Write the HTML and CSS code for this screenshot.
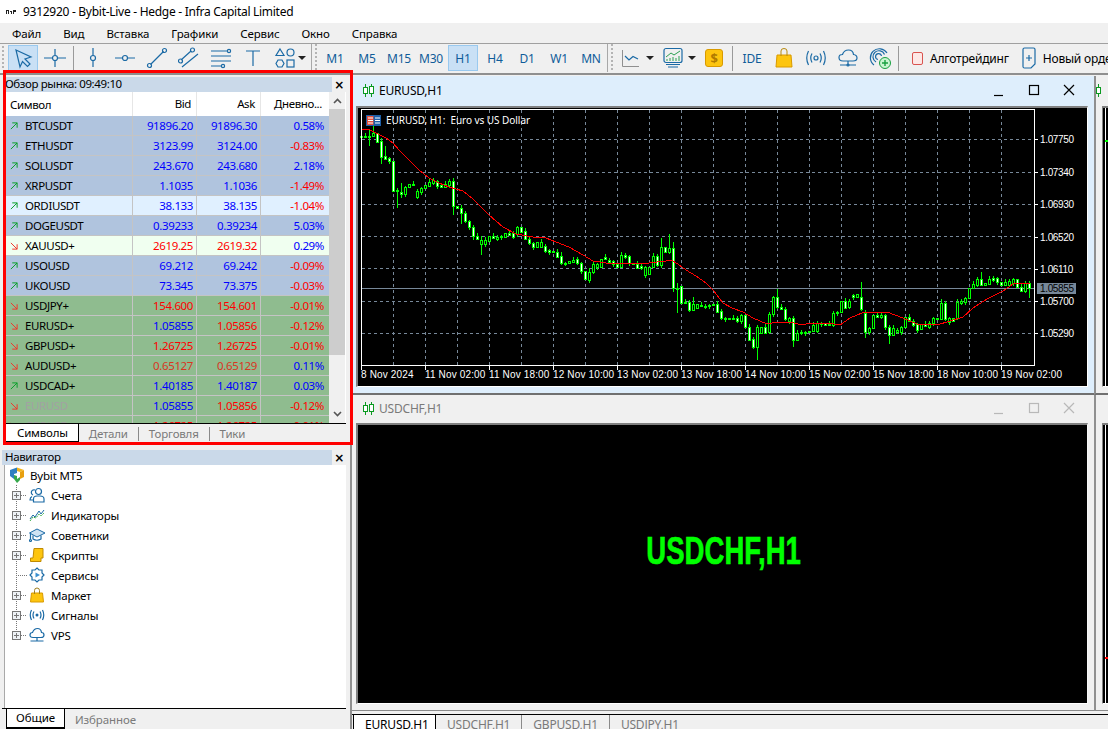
FILE: index.html
```html
<!DOCTYPE html>
<html lang="ru">
<head>
    <meta charset="UTF-8">
    <meta name="viewport" content="width=device-width, initial-scale=1.0">
    <title>9312920 - Bybit-Live - Hedge - Infra Capital Limited</title>
    <link rel="stylesheet" href="styles.css">
</head>

<body>
    <svg class="defs">
        <symbol id="arrow-up" viewBox="0 0 9 9"><path d="M1 8 L8 1 M2.5 1 H8 V6.5"/></symbol>
        <symbol id="arrow-down" viewBox="0 0 9 9"><path d="M1 1 L8 8 M2.5 8 H8 V2.5"/></symbol>
        <symbol id="plus-box" viewBox="0 0 9 9"><rect x="0.5" y="0.5" width="8" height="8"/><path d="M2 4.5 H7 M4.5 2 V7"/></symbol>
    </svg>

    <div class="title-bar">
        <svg class="title-icon" width="10" height="6" viewBox="0 0 10 6"><path d="M0 1 H3 V5 H2 V2 H1 V5 H0 Z M4 2 H6 V5 H5 V3 H4 Z M7 1 H10 V3 H8 V5 H7 Z" fill="#222"/></svg>
        <span>9312920 - Bybit-Live - Hedge - Infra Capital Limited</span>
    </div>

    <div class="menu-bar">
        <span>Файл</span><span>Вид</span><span>Вставка</span><span>Графики</span><span>Сервис</span><span>Окно</span><span>Справка</span>
    </div>

    <div class="tool-bar">
        <div class="grip-dots"></div>
        <div class="tool active">
            <svg width="22" height="22" viewBox="0 0 22 22"><path class="ic" d="M4 3 L19 10 L13 12 L18 17 L15.5 19.5 L10.5 14.5 L8 20 Z" fill="#dcecf8"/></svg>
        </div>
        <div class="tool">
            <svg width="22" height="22" viewBox="0 0 22 22"><path class="ic" d="M0 11 H8 M14 11 H22 M11 2 V8 M11 14 V20"/><circle class="ic" cx="11" cy="11" r="2.5"/></svg>
        </div>
        <div class="tool-sep"></div>
        <div class="tool">
            <svg width="22" height="22" viewBox="0 0 22 22"><path class="ic" d="M11 1 V8.5 M11 13.5 V20"/><circle class="ic" cx="11" cy="11" r="2.5"/></svg>
        </div>
        <div class="tool">
            <svg width="22" height="22" viewBox="0 0 22 22"><path class="ic" d="M1 11 H8.5 M13.5 11 H21"/><circle class="ic" cx="11" cy="11" r="2.5"/></svg>
        </div>
        <div class="tool">
            <svg width="22" height="22" viewBox="0 0 22 22"><path class="ic" d="M4.5 17.5 L17.5 4.5"/><circle class="ic" cx="3.5" cy="18.5" r="2"/><circle class="ic" cx="18.5" cy="3.5" r="2"/></svg>
        </div>
        <div class="tool">
            <svg width="22" height="22" viewBox="0 0 22 22"><path class="ic" d="M3 13 L13 4 M4 20 L20 7"/><circle class="ic" cx="2.5" cy="14" r="2"/><circle class="ic" cx="14.5" cy="3" r="2"/></svg>
        </div>
        <div class="tool">
            <svg width="22" height="22" viewBox="0 0 22 22"><path class="ic" d="M1 4 H17 M1 9 H21 M1 14 H21 M1 19 H11"/><circle class="ic" cx="19" cy="4" r="1.6"/><circle class="ic" cx="13" cy="19" r="1.6"/></svg>
        </div>
        <div class="tool">
            <svg width="22" height="22" viewBox="0 0 22 22"><path class="ic" d="M4 4 H18 M11 4 V19"/></svg>
        </div>
        <div class="tool">
            <svg width="22" height="22" viewBox="0 0 22 22"><path class="ic" d="M6 2 L10 8.5 H2 Z M4 13 H8 L10 16.5 L8 20 H4 L2 16.5 Z"/><circle class="ic" cx="16.5" cy="5.5" r="3.5"/><rect class="ic" x="13" y="13" width="7" height="7"/></svg>
        </div>
        <div class="caret narrow"></div>
        <div class="tool-grip"></div>
        <div class="tool tf">M1</div>
        <div class="tool tf">M5</div>
        <div class="tool tf">M15</div>
        <div class="tool tf">M30</div>
        <div class="tool tf active">H1</div>
        <div class="tool tf">H4</div>
        <div class="tool tf">D1</div>
        <div class="tool tf">W1</div>
        <div class="tool tf">MN</div>
        <div class="tool-grip second"></div>
        <div class="tool">
            <svg width="20" height="20" viewBox="0 0 20 20"><path d="M1.5 2 V18.5 H18" fill="none" stroke="#909090"/><path class="ic" d="M4 8 L8 12 L12 8.5 L17 11"/></svg>
        </div>
        <div class="caret"></div>
        <div class="tool small">
            <svg width="22" height="22" viewBox="0 0 22 22"><rect class="ic" x="2" y="1.5" width="18" height="14" rx="2"/><path d="M4 10 L9 6 L12 8 L18 4" fill="none" stroke="#2aa050"/><path d="M5 14 V12 M8 14 V11 M11 14 V10 M14 14 V11 M17 14 V9" stroke="#2aa050"/><path class="ic" d="M4 17.5 H18 M6 20 H16"/></svg>
        </div>
        <div class="caret"></div>
        <div class="tool small-gap">
            <svg width="18" height="18" viewBox="0 0 18 18"><rect x="0.5" y="0.5" width="17" height="17" rx="2.5" fill="#fdc50f" stroke="#d99a00"/><text x="9" y="13.5" class="dollar">$</text></svg>
        </div>
        <div class="tool-sep plain"></div>
        <div class="tool ide">IDE</div>
        <div class="tool">
            <svg width="20" height="22" viewBox="0 0 20 22"><path d="M3 8 H17 L18 20 H2 Z" fill="#fdc50f" stroke="#d99a00"/><path d="M7 9 V4 Q7 1.5 10 1.5 Q13 1.5 13 4 V9" fill="none" stroke="#b88a10"/></svg>
        </div>
        <div class="tool">
            <svg width="22" height="18" viewBox="0 0 22 18"><circle class="ic" cx="11" cy="9" r="2"/><path class="ic" d="M7 4.5 Q4.5 9 7 13.5 M15 4.5 Q17.500 9 15 13.500 M3.500 2 Q0 9 3.500 16 M18.500 2 Q22 9 18.500 16"/></svg>
        </div>
        <div class="tool">
            <svg width="22" height="22" viewBox="0 0 22 22"><path class="ic" d="M6 14 Q2 14 2 10.500 Q2 7.500 5.500 7.500 Q7 3 11.500 3 Q16 3 16.500 7.500 Q20 8 20 11 Q20 14 16 14 Z M11 14 V18 M3 18 H19"/><circle class="ic" cx="11" cy="18" r="1"/></svg>
        </div>
        <div class="tool">
            <svg width="24" height="24" viewBox="0 0 24 24"><path class="ic" d="M6 19 A9 9 0 1 1 19 7 M8 16 A6 6 0 1 1 16.500 8.500 M10 13.500 A3 3 0 1 1 13.500 10"/><circle cx="17" cy="17" r="5.500" fill="#c8f5d0" stroke="#18a040"/><path d="M17 14 V20 M14 17 H20" stroke="#18a040" stroke-width="1.400"/></svg>
        </div>
        <div class="tool-sep plain"></div>
        <div class="tool-wide">
            <span class="algo-box"></span>
            <span>Алготрейдинг</span>
        </div>
        <div class="tool-wide">
            <svg width="14" height="22" viewBox="0 0 14 22"><path class="ic" d="M1 2.500 Q1 1 2.500 1 H11.500 Q13 1 13 2.500 V17 L9 21 H2.500 Q1 21 1 19.500 Z M4 11 H10 M7 8 V14"/></svg>
            <span>Новый ордер</span>
        </div>
    </div>

    <div class="work-area">
        <div class="dock">
            <div class="pane market">
                <div class="pane-head"><span class="pane-name">Обзор рынка: 09:49:10</span><span class="pane-close">×</span></div>
                <div class="watch">
                    <div class="watch-list">
                        <div class="watch-row head">
                            <div class="col-sym">Символ</div><div class="col">Bid</div><div class="col">Ask</div><div class="col col-day">Дневно...</div>
                        </div>
                        <div class="watch-rows">
                            <div class="watch-row steel"><div class="col-sym"><svg class="arr up"><use href="#arrow-up"/></svg>BTCUSDT</div><div class="col b">91896.20</div><div class="col b">91896.30</div><div class="col col-day b">0.58%</div></div>
                            <div class="watch-row steel"><div class="col-sym"><svg class="arr up"><use href="#arrow-up"/></svg>ETHUSDT</div><div class="col b">3123.99</div><div class="col b">3124.00</div><div class="col col-day r">-0.83%</div></div>
                            <div class="watch-row steel"><div class="col-sym"><svg class="arr up"><use href="#arrow-up"/></svg>SOLUSDT</div><div class="col b">243.670</div><div class="col b">243.680</div><div class="col col-day b">2.18%</div></div>
                            <div class="watch-row steel"><div class="col-sym"><svg class="arr up"><use href="#arrow-up"/></svg>XRPUSDT</div><div class="col b">1.1035</div><div class="col b">1.1036</div><div class="col col-day r">-1.49%</div></div>
                            <div class="watch-row sky"><div class="col-sym"><svg class="arr up"><use href="#arrow-up"/></svg>ORDIUSDT</div><div class="col b">38.133</div><div class="col b">38.135</div><div class="col col-day r">-1.04%</div></div>
                            <div class="watch-row steel"><div class="col-sym"><svg class="arr up"><use href="#arrow-up"/></svg>DOGEUSDT</div><div class="col b">0.39233</div><div class="col b">0.39234</div><div class="col col-day b">5.03%</div></div>
                            <div class="watch-row dew"><div class="col-sym"><svg class="arr down"><use href="#arrow-down"/></svg>XAUUSD+</div><div class="col r">2619.25</div><div class="col r">2619.32</div><div class="col col-day b">0.29%</div></div>
                            <div class="watch-row steel"><div class="col-sym"><svg class="arr up"><use href="#arrow-up"/></svg>USOUSD</div><div class="col b">69.212</div><div class="col b">69.242</div><div class="col col-day r">-0.09%</div></div>
                            <div class="watch-row steel"><div class="col-sym"><svg class="arr up"><use href="#arrow-up"/></svg>UKOUSD</div><div class="col b">73.345</div><div class="col b">73.375</div><div class="col col-day r">-0.03%</div></div>
                            <div class="watch-row sea"><div class="col-sym"><svg class="arr down"><use href="#arrow-down"/></svg>USDJPY+</div><div class="col r">154.600</div><div class="col r">154.601</div><div class="col col-day r">-0.01%</div></div>
                            <div class="watch-row sea"><div class="col-sym"><svg class="arr down"><use href="#arrow-down"/></svg>EURUSD+</div><div class="col b">1.05855</div><div class="col r">1.05856</div><div class="col col-day r">-0.12%</div></div>
                            <div class="watch-row sea"><div class="col-sym"><svg class="arr down"><use href="#arrow-down"/></svg>GBPUSD+</div><div class="col r">1.26725</div><div class="col r">1.26725</div><div class="col col-day r">-0.01%</div></div>
                            <div class="watch-row sea"><div class="col-sym"><svg class="arr down"><use href="#arrow-down"/></svg>AUDUSD+</div><div class="col r soft">0.65127</div><div class="col r soft">0.65129</div><div class="col col-day b">0.11%</div></div>
                            <div class="watch-row sea"><div class="col-sym"><svg class="arr up"><use href="#arrow-up"/></svg>USDCAD+</div><div class="col b">1.40185</div><div class="col b">1.40187</div><div class="col col-day b">0.03%</div></div>
                            <div class="watch-row sea"><div class="col-sym off"><svg class="arr down"><use href="#arrow-down"/></svg>EURUSD</div><div class="col b">1.05855</div><div class="col r">1.05856</div><div class="col col-day r">-0.12%</div></div>
                            <div class="watch-row sea"><div class="col-sym off"><svg class="arr down"><use href="#arrow-down"/></svg>GBPUSD</div><div class="col r">1.26725</div><div class="col r">1.26725</div><div class="col col-day r">-0.01%</div></div>
                        </div>
                    </div>
                    <div class="scroll">
                        <svg class="chev" width="9" height="6" viewBox="0 0 9 6"><path d="M1 5 L4.500 1.500 L8 5"/></svg>
                        <div class="scroll-track"><div class="scroll-thumb"></div></div>
                        <svg class="chev" width="9" height="6" viewBox="0 0 9 6"><path d="M1 1 L4.500 4.500 L8 1"/></svg>
                    </div>
                </div>
                <div class="tabs">
                    <div class="tab active">Символы</div>
                    <div class="tab">Детали</div>
                    <div class="tab-sep"></div>
                    <div class="tab">Торговля</div>
                    <div class="tab-sep"></div>
                    <div class="tab">Тики</div>
                </div>
            </div>

            <div class="pane nav">
                <div class="pane-head"><span class="pane-name">Навигатор</span><span class="pane-close">×</span></div>
                <div class="tree">
                    <div class="tree-root">
                        <svg width="16" height="16" viewBox="0 0 16 16"><path d="M1 3 L8 0.500 L8 6 L5 7 L5 12 L1 9 Z" fill="#2f7fc0"/><path d="M8 0.500 L15 3 L11 5 L8 4 Z" fill="#f3b51c"/><path d="M11 5 L15 3 L15 10 L11 12 Z" fill="#e8a010"/><path d="M5 12 L5 8 L8 9 V12 L11 10 V13 L8 16 Z" fill="#35a84a"/></svg>
                        <span>Bybit MT5</span>
                    </div>
                    <div class="tree-items">
                        <div class="tree-row"><svg class="plus"><use href="#plus-box"/></svg><span class="dots"></span>
                            <svg class="node" width="16" height="16" viewBox="0 0 16 16"><circle class="ic" cx="9.500" cy="4.500" r="3"/><path class="ic" d="M4.500 15 V12 Q4.500 9 8 9 H11 Q15 9 15 12 V15 Z M4 8 A2.500 2.500 0 1 1 6 3 M3 9.500 Q1 10.500 1 13 H4"/></svg>
                            <span>Счета</span></div>
                        <div class="tree-row"><svg class="plus"><use href="#plus-box"/></svg><span class="dots"></span>
                            <svg class="node" width="16" height="16" viewBox="0 0 16 16"><path d="M1 12 L4 8 L6 10 L10 4 L12 7 L15 3" fill="none" stroke="#1b6aa5"/><path d="M1 14 L4 10 L7 11 L10 7 L12 9 L15 6" fill="none" stroke="#3ab04a" stroke-dasharray="2 1"/></svg>
                            <span>Индикаторы</span></div>
                        <div class="tree-row"><svg class="plus"><use href="#plus-box"/></svg><span class="dots"></span>
                            <svg class="node" width="16" height="16" viewBox="0 0 16 16"><path d="M8 2 L16 6 L8 10 L0.500 6 Z" fill="#cfe3f3" stroke="#1b6aa5"/><path class="ic" d="M4 8.500 V12 Q8 14.500 12 12 V8.500 M1.500 6.500 V12"/><circle class="ic" cx="1.500" cy="13.500" r="1"/></svg>
                            <span>Советники</span></div>
                        <div class="tree-row"><svg class="plus"><use href="#plus-box"/></svg><span class="dots"></span>
                            <svg class="node" width="16" height="16" viewBox="0 0 16 16"><path d="M5 1.500 H14 V11 H12 V14.500 H1.500 V11 H4 Z" fill="#fdc50f" stroke="#c08a00"/></svg>
                            <span>Скрипты</span></div>
                        <div class="tree-row no-plus"><span class="dots long"></span>
                            <svg class="node" width="16" height="16" viewBox="0 0 16 16"><path class="ic" d="M8 1 L10 3 H13 V6 L15 8 L13 10 V13 H10 L8 15 L6 13 H3 V10 L1 8 L3 6 V3 H6 Z"/><path d="M6.500 5.500 L11 8 L6.500 10.500 Z" fill="#3a8fd0"/></svg>
                            <span>Сервисы</span></div>
                        <div class="tree-row"><svg class="plus"><use href="#plus-box"/></svg><span class="dots"></span>
                            <svg class="node" width="16" height="16" viewBox="0 0 16 16"><path d="M2.500 6 H13.500 L14.500 15 H1.500 Z" fill="#fdc50f" stroke="#d99a00"/><path d="M5.500 7 V3.500 Q5.500 1 8 1 Q10.500 1 10.500 3.500 V7" fill="none" stroke="#a08020"/></svg>
                            <span>Маркет</span></div>
                        <div class="tree-row"><svg class="plus"><use href="#plus-box"/></svg><span class="dots"></span>
                            <svg class="node" width="16" height="16" viewBox="0 0 16 16"><circle cx="8" cy="8" r="1.500" fill="#1b6aa5"/><path class="ic" d="M5 4.500 Q3 8 5 11.500 M11 4.500 Q13 8 11 11.500 M2.500 3 Q0 8 2.500 13 M13.500 3 Q16 8 13.500 13"/></svg>
                            <span>Сигналы</span></div>
                        <div class="tree-row"><svg class="plus"><use href="#plus-box"/></svg><span class="dots"></span>
                            <svg class="node" width="16" height="16" viewBox="0 0 16 16"><path class="ic" d="M4 10.500 Q1 10.500 1 8 Q1 5.500 3.500 5.500 Q5 1.500 8.500 1.500 Q12 1.500 12.500 5.500 Q15 5.500 15 8 Q15 10.500 12 10.500 Z M8 10.500 V14 M1.500 14 H14.500"/></svg>
                            <span>VPS</span></div>
                    </div>
                </div>
                <div class="tabs nav-tabs">
                    <div class="tab active">Общие</div>
                    <div class="tab">Избранное</div>
                </div>
            </div>
        </div>

        <div class="mdi">
            <div class="chart-win focus" id="win-eurusd">
                <div class="win-head">
                    <svg class="candle-ic" width="11" height="13" viewBox="0 0 11 13"><path d="M2.500 0 V13 M8.500 0 V13" stroke="#0a9a20"/><rect x="0.500" y="3.500" width="4" height="6" fill="#fff" stroke="#0a9a20"/><rect x="6.500" y="2.500" width="4" height="7" fill="#fff" stroke="#0a9a20"/></svg>
                    <span class="win-name">EURUSD,H1</span>
                    <div class="win-btns">
                        <svg width="14" height="14" viewBox="0 0 14 14"><path d="M2 12.500 H11"/></svg>
                        <svg width="14" height="14" viewBox="0 0 14 14"><rect x="2.500" y="2.500" width="9" height="9"/></svg>
                        <svg width="14" height="14" viewBox="0 0 14 14"><path d="M2 2 L12 12 M12 2 L2 12"/></svg>
                    </div>
                </div>
                <div class="win-body">
                    <svg id="chart" class="chart-svg" viewBox="358 108 729 278"></svg>
                </div>
            </div>

            <div class="chart-win blur" id="win-usdchf">
                <div class="win-head">
                    <svg class="candle-ic" width="11" height="13" viewBox="0 0 11 13"><path d="M2.500 0 V13 M8.500 0 V13" stroke="#0a9a20"/><rect x="0.500" y="3.500" width="4" height="6" fill="#fff" stroke="#0a9a20"/><rect x="6.500" y="2.500" width="4" height="7" fill="#fff" stroke="#0a9a20"/></svg>
                    <span class="win-name">USDCHF,H1</span>
                    <div class="win-btns">
                        <svg width="14" height="14" viewBox="0 0 14 14"><path d="M2 12.500 H11"/></svg>
                        <svg width="14" height="14" viewBox="0 0 14 14"><rect x="2.500" y="2.500" width="9" height="9"/></svg>
                        <svg width="14" height="14" viewBox="0 0 14 14"><path d="M2 2 L12 12 M12 2 L2 12"/></svg>
                    </div>
                </div>
                <div class="win-body blank"><span class="blank-name">USDCHF,H1</span></div>
            </div>

            <div class="chart-win side" id="win-gbpusd">
                <div class="win-head"><svg class="candle-ic" width="11" height="13" viewBox="0 0 11 13"><path d="M2.500 0 V13" stroke="#0a9a20"/><rect x="0.500" y="3.500" width="4" height="6" fill="#fff" stroke="#0a9a20"/></svg></div>
                <div class="win-body"><span class="side-mark green"></span></div>
            </div>

            <div class="chart-win side lower" id="win-usdjpy">
                <div class="win-head"></div>
                <div class="win-body"><span class="side-mark red"></span></div>
            </div>

            <div class="chart-tabs">
                <div class="chart-tab active">EURUSD,H1</div>
                <div class="chart-tab">USDCHF,H1</div>
                <div class="tab-sep"></div>
                <div class="chart-tab">GBPUSD,H1</div>
                <div class="tab-sep"></div>
                <div class="chart-tab">USDJPY,H1</div>
            </div>
        </div>

        <div class="market-mark"></div>
    </div>

    <script src="chart.js"></script>
</body>
</html>
```

FILE: styles.css
```css
* {
  box-sizing: border-box;
}

html, body {
  margin: 0;
  width: 1108px;
  height: 729px;
  overflow: hidden;
  background: #f0f0f0;
  font-family: "Noto Sans", "Open Sans", sans-serif;
  font-size: 11.5px;
  letter-spacing: -0.38px;
  color: #000;
}

.defs {
  display: none;
}

.ic {
  fill: none;
  stroke: #1b6aa5;
  stroke-width: 1.2;
}

.title-bar {
  display: flex;
  align-items: center;
  height: 23px;
  padding-left: 6px;
  background: #fff;
  font-size: 12px;
  letter-spacing: -0.28px;
}

.title-icon {
  margin-right: 7px;
}

.menu-bar {
  display: flex;
  align-items: center;
  height: 20px;
  padding-left: 1px;
  background: #f0f0f0;
  letter-spacing: -0.12px;
}

.menu-bar span {
  padding: 0 11px;
}

.tool-bar {
  display: flex;
  align-items: center;
  height: 32px;
  padding: 0 0 1px 2px;
  background: #f0f0f0;
  border-top: 1px solid #a0a0a0;
  border-bottom: 2px solid #8f8f8f;
  white-space: nowrap;
  overflow: hidden;
}

.grip-dots {
  flex: none;
  width: 2px;
  height: 24px;
  margin-right: 3px;
  background: repeating-linear-gradient(to bottom, #b4b4b4 0 2px, transparent 2px 4px);
}

.tool {
  display: flex;
  align-items: center;
  justify-content: center;
  flex: none;
  width: 32px;
  height: 26px;
}

.tool.active {
  width: 30px;
  margin: 0 1px;
  background: #c9e0f5;
  box-shadow: inset 0 0 0 1px #99c9ef;
}

.tool.tf, .tool.ide {
  color: #0f5c99;
  font-size: 12px;
  letter-spacing: -0.2px;
}

.tool.small {
  width: 32px;
  margin-left: 3px;
}

.tool.small-gap {
  margin-left: 2px;
}

.tool-sep {
  flex: none;
  width: 1px;
  height: 25px;
  margin: 0 3px 0 2px;
  background: #9a9a9a;
}

.tool-grip {
  flex: none;
  width: 6px;
  height: 28px;
  margin: 0 2px 0 5px;
  border-left: 1px solid #a8a8a8;
  background: repeating-linear-gradient(to bottom, #b4b4b4 0 2px, transparent 2px 4px) right 0 top 0 / 2px 100% no-repeat;
}

.tool-grip.second {
  margin: 0 2px 0 0;
}

.caret {
  flex: none;
  height: 0;
  margin: 0 0 0 -1px;
  border: 4px solid transparent;
  border-top: 4px solid #222;
  border-bottom: 0;
  width: 8px;
}

.caret.narrow {
  margin-left: -3px;
}

.dollar {
  font-size: 13px;
  font-weight: 700;
  fill: #b07a00;
  text-anchor: middle;
}

.tool-wide {
  display: flex;
  align-items: center;
  flex: none;
  gap: 7px;
  height: 26px;
  padding: 0 13px 0 10px;
  font-size: 12px;
  letter-spacing: -0.2px;
}

.tool-wide + .tool-wide {
  padding-left: 0;
}

.algo-box {
  width: 11px;
  height: 13px;
  background: #fde8e6;
  border: 1px solid #d9534f;
  border-radius: 2px;
}

.work-area {
  position: relative;
  display: flex;
  height: 654px;
}

.dock {
  flex: none;
  display: flex;
  flex-direction: column;
  width: 352px;
  border-right: 2px solid #8f8f8f;
  background: #f0f0f0;
}

.pane {
  display: flex;
  flex-direction: column;
  margin: 0 4px 0 5px;
}

.market {
  height: 366px;
  margin-top: 2px;
}

.nav {
  flex: 1;
  margin-top: 7px;
  margin-left: 2px;
}

.pane-head {
  display: flex;
  align-items: center;
  height: 15px;
  flex: none;
}

.pane-name {
  flex: 1;
  height: 15px;
  line-height: 14px;
  background: #cad9e9;
}

.nav .pane-name {
  padding-left: 3px;
}

.pane-close {
  width: 14px;
  text-align: center;
  font-family: "DejaVu Sans", sans-serif;
  font-size: 12px;
  font-weight: 700;
  line-height: 14px;
}

.watch {
  display: flex;
  flex: 1;
  min-height: 0;
  background: #fff;
}

.watch-list {
  display: flex;
  flex-direction: column;
  width: 324px;
}

.watch-rows {
  flex: 1;
  min-height: 0;
  overflow: hidden;
}

.watch-row {
  display: flex;
  height: 20px;
  line-height: 19px;
  border-bottom: 1px solid #c4c4c4;
  white-space: nowrap;
}

.watch-row.head {
  flex: none;
  height: 24px;
  line-height: 23px;
  background: #fff;
  border-bottom: 0;
}

.watch-row.steel { background: #b0c4de; }
.watch-row.sky { background: #e0f0ff; }
.watch-row.dew { background: #f0fff0; }
.watch-row.sea { background: #8fbc8f; }

.col-sym {
  display: flex;
  align-items: center;
  width: 127px;
  padding-left: 5px;
}

.col {
  width: 64px;
  padding-right: 3px;
  text-align: right;
  border-left: 1px solid #c4c4c4;
}

.watch-row.head .col {
  padding-right: 5px;
  border-left: 1px solid #e6e6e6;
}

.col-day {
  width: 69px;
  padding-right: 5px;
}

.watch-row.head .col-day {
  padding-right: 7px;
}

.b { color: #0000ff; }
.r { color: #ff0000; }
.soft { color: #d9361f; }
.off { color: #a2a2a2; }

.arr {
  flex: none;
  width: 8px;
  height: 8px;
  margin-right: 7px;
  fill: none;
  stroke-width: 1.1;
}

.arr.up { stroke: #0aa02a; }
.arr.down { stroke: #f0382a; }

.scroll {
  display: flex;
  flex-direction: column;
  align-items: center;
  flex: none;
  width: 16px;
  background: #f0f0f0;
}

.chev {
  flex: none;
  margin: 6px 0;
  fill: none;
  stroke: #555;
  stroke-width: 1.6;
}

.scroll-track {
  flex: 1;
  width: 100%;
  margin-top: -1px;
}

.scroll-thumb {
  width: 100%;
  height: 246px;
  background: #cdcdcd;
}

.tabs {
  display: flex;
  align-items: center;
  flex: none;
  height: 20px;
  padding-left: 1px;
  border-top: 1px solid #000;
  color: #7a7a7a;
  letter-spacing: -0.2px;
}

.tab {
  padding: 0 10px;
}

.tab.active {
  align-self: stretch;
  line-height: 18px;
  padding: 0 10px 0 11px;
  margin-top: -1px;
  color: #000;
  background: #fff;
  border: 1px solid #000;
  border-left: 0;
  border-bottom: 2px solid #000;
}

.tab-sep {
  flex: none;
  width: 1px;
  height: 14px;
  background: #8a8a8a;
}

.tree {
  flex: 1;
  min-height: 0;
  margin-left: 2px;
  background: #fff;
  border-left: 1px solid #a9a9a9;
  letter-spacing: -0.18px;
}

.tree-root {
  display: flex;
  align-items: center;
  gap: 5px;
  height: 20px;
  padding-left: 4px;
}

.tree-items {
  margin-left: 11px;
  background: repeating-linear-gradient(to bottom, #777 0 1px, transparent 1px 2px) 0 0 / 1px 150px no-repeat;
}

.tree-row {
  display: flex;
  align-items: center;
  height: 20px;
}

.plus {
  flex: none;
  width: 9px;
  height: 9px;
  margin-left: -4px;
  fill: #eef2f6;
  stroke: #777;
}

.plus path {
  stroke: #334;
}

.dots {
  flex: none;
  width: 5px;
  height: 1px;
  margin: 0 3px 0 0;
  background: repeating-linear-gradient(to right, #777 0 1px, transparent 1px 2px);
}

.dots.long {
  width: 12px;
  margin-right: 1px;
}

.node {
  flex: none;
  margin-right: 6px;
}

.nav-tabs {
  height: 21px;
  padding-left: 4px;
  letter-spacing: -0.1px;
}

.nav-tabs .tab.active {
  padding: 0 9px;
  border-left: 1px solid #000;
}

.mdi {
  position: relative;
  flex: 1;
  overflow: hidden;
}

.chart-win {
  position: absolute;
  display: flex;
  flex-direction: column;
}

.chart-win.focus {
  top: 1px;
  left: 0;
  width: 742px;
  height: 319px;
  background: #deeefc;
  border-bottom: 2px solid #707070;
}

.chart-win.blur {
  top: 320px;
  left: 0;
  width: 742px;
  height: 316px;
  background: #f0f0f0;
  border-bottom: 1px solid #8a8a8a;
}

.chart-win.side {
  top: 1px;
  left: 742px;
  width: 14px;
  height: 319px;
  background: #f0f0f0;
  border-left: 2px solid #8f8f8f;
  border-bottom: 2px solid #707070;
}

.chart-win.side.lower {
  top: 320px;
  height: 316px;
  border-bottom: 1px solid #8a8a8a;
}

.win-head {
  display: flex;
  align-items: center;
  flex: none;
  height: 30px;
  padding: 0 18px 2px 11px;
}

.blur .win-head, .lower .win-head {
  height: 28px;
  padding-bottom: 2px;
  color: #7a7a7a;
}

.candle-ic {
  flex: none;
  margin-right: 5px;
}

.side .win-head {
  padding-left: 0;
}

.win-btns {
  display: flex;
  gap: 21px;
  margin-left: auto;
  fill: none;
  stroke: #000;
  stroke-width: 1.2;
}

.win-name {
  font-size: 12px;
  letter-spacing: -0.2px;
}

.blur .win-btns {
  stroke: #b8b8b8;
}

.win-body {
  flex: none;
  height: 281px;
  margin: 0 6px 0 4px;
  background: #000;
  border-top: 2px solid #808080;
  border-left: 2px solid #808080;
  border-right: 1px solid #fff;
  border-bottom: 1px solid #fff;
}

.blur .win-body {
  border-right-color: #f7f7f7;
}

.chart-svg {
  display: block;
  width: 729px;
  height: 278px;
}

.blank {
  display: flex;
  align-items: center;
  justify-content: center;
  padding-bottom: 26px;
}

.blank-name {
  margin-left: 3px;
  color: #00ff00;
  font-family: "Liberation Sans", Arial, sans-serif;
  font-size: 38px;
  font-weight: 700;
  letter-spacing: 0;
  -webkit-text-stroke: 0.6px #00ff00;
  transform: scaleX(0.725);
}

.side .win-body {
  position: relative;
  margin: 0 0 0 6px;
  border-left: 1px solid #808080;
  border-right: 0;
  background: linear-gradient(#fff, #fff) 2px 0 / 1px 100% no-repeat #000;
}

.side-mark {
  position: absolute;
  left: 2px;
  width: 5px;
  height: 2px;
}

.side-mark.green {
  top: 32px;
  background: #00ff00;
}

.side-mark.red {
  top: 232px;
  background: #ff0000;
}

.chart-tabs {
  position: absolute;
  left: 0;
  right: 0;
  top: 639px;
  display: flex;
  align-items: center;
  height: 15px;
  padding-left: 1px;
  border-top: 1px solid #000;
  color: #7a7a7a;
  font-size: 12px;
  letter-spacing: -0.2px;
  overflow: hidden;
}

.chart-tab {
  flex: none;
  padding: 0 11px;
  line-height: 19px;
  height: 15px;
}

.chart-tab.active {
  color: #000;
  background: #fff;
  border-right: 1px solid #000;
  border-left: 1px solid #000;
  width: 83px;
}

.market-mark {
  position: absolute;
  top: -5px;
  left: 3px;
  width: 350px;
  height: 375px;
  border: 3px solid #ff0000;
  pointer-events: none;
}

.axis-text {
  fill: #fff;
  font-family: "Liberation Sans", Arial, sans-serif;
  font-size: 10px;
  letter-spacing: 0.15px;
}

.price-text {
  letter-spacing: -0.35px;
}

.chart-name {
  fill: #fff;
  font-family: "Noto Sans", sans-serif;
  font-size: 10px;
  letter-spacing: -0.05px;
  white-space: pre;
}

.price-tag {
  fill: #000;
  font-family: "Liberation Sans", Arial, sans-serif;
  font-size: 10px;
  letter-spacing: -0.35px;
}
```

FILE: chart.js
```js
// EURUSD H1 bars read off the chart: [body top, body bottom, bear]
// y values are page pixels, the svg viewBox uses page coordinates too
const bars = [
  [136,137,0],[136,137,0],[136,137,0],[133,136,0],[133,142,1],[141,157,1],[156,159,1],[158,161,1],
  [161,191,1],[190,191,0],[192,194,1],[187,194,0],[184,187,0],[184,185,0],[191,197,0],[188,192,0],
  [185,188,0],[182,186,0],[180,183,0],[181,186,1],[185,187,1],[184,187,0],[181,185,0],[181,206,1],
  [206,208,1],[208,213,1],[213,221,1],[221,227,1],[227,236,1],[236,239,1],[240,244,0],[240,244,0],
  [236,241,0],[236,238,1],[237,239,0],[236,237,0],[233,237,0],[233,235,1],[233,237,1],[227,234,0],
  [227,232,1],[231,239,1],[239,243,1],[243,247,1],[242,247,0],[242,247,0],[246,251,1],[250,252,1],
  [251,252,1],[252,257,1],[256,263,1],[263,263,0],[261,263,0],[260,262,0],[259,263,1],[263,271,1],
  [271,279,1],[272,280,0],[264,272,0],[264,267,0],[259,267,0],[257,259,1],[260,262,1],[261,264,1],
  [264,267,1],[255,267,0],[255,257,1],[256,263,1],[263,264,1],[264,268,1],[266,268,1],[267,275,0],
  [267,274,0],[256,267,0],[256,265,1],[247,265,0],[247,252,1],[248,252,0],[248,288,1],[288,288,0],
  [286,303,1],[302,303,0],[302,310,1],[304,310,0],[304,308,0],[305,306,0],[306,307,0],[305,306,0],
  [304,305,0],[304,312,1],[311,318,1],[318,319,1],[318,319,0],[318,319,0],[318,321,1],[315,321,0],
  [315,327,1],[327,340,1],[339,347,1],[327,347,0],[327,333,0],[327,333,1],[314,332,0],[297,314,0],
  [297,307,1],[307,309,1],[309,319,1],[318,321,0],[318,340,1],[333,340,0],[332,333,0],[332,333,0],
  [331,332,0],[325,331,0],[323,331,0],[323,324,0],[323,325,1],[324,325,0],[313,325,0],[312,313,0],
  [301,312,0],[301,308,1],[301,307,0],[295,297,1],[294,297,0],[297,309,1],[313,332,1],[328,332,0],
  [315,328,0],[315,317,1],[315,317,0],[315,327,1],[327,335,1],[328,335,0],[330,332,0],[327,332,0],
  [317,327,0],[317,321,1],[321,325,1],[324,330,1],[324,329,0],[324,326,1],[323,327,0],[318,323,0],
  [318,319,0],[303,319,0],[303,319,1],[318,322,0],[318,321,1],[302,318,0],[301,303,0],[298,302,0],
  [288,298,0],[284,288,0],[279,285,0],[279,285,1],[283,285,0],[279,284,0],[278,280,1],[278,282,1],
  [282,285,1],[282,285,0],[281,285,0],[279,283,0],[279,287,1],[287,291,1],[283,291,0],[283,288,1]
];

// long wicks worth keeping: bar index -> [high, low]
const wicks = {
  2: [130,146], 3: [126,137], 5: [138,164], 6: [146,160], 9: [188,208], 10: [183,198], 23: [178,215],
  25: [205,224], 28: [225,240], 30: [236,255], 31: [237,247], 50: [252,265], 57: [268,283], 75: [238,268],
  77: [234,254], 78: [242,292], 79: [283,313], 83: [297,311], 99: [325,360], 104: [289,309], 108: [316,347],
  125: [282,311], 126: [310,338], 132: [325,344], 145: [299,320], 149: [299,320], 155: [272,286], 167: [281,298]
};

// 14 period average, drawn as one red line
const avg = [
  [361,129],[368,129],[376,133],[386,138],[393,143],[399,150],[409,160],[419,170],[429,178],[439,183],
  [449,187],[463,191],[473,199],[481,207],[489,215],[503,227],[516,234],[533,237],[546,238],[556,242],
  [569,247],[583,255],[593,261],[606,263],[623,264],[649,263],[666,261],[671,260],[678,264],[686,270],
  [696,276],[706,283],[714,291],[723,303],[732,308],[743,312],[753,318],[767,324],[777,322],[790,322],
  [802,325],[810,323],[827,323],[840,325],[850,318],[862,313],[877,312],[887,312],[903,318],[917,324],
  [937,325],[950,321],[963,317],[973,308],[987,299],[1003,291],[1013,284],[1030,283]
];

const grid = {
  xs: [393,425,457,489,521,553,585,617,649,681,713,745,777,809,841,873,905,937,969,1001],
  ys: [139,172,204,236,268,301,333]
};

const priceLabels = [
  ['1.07750', 139], ['1.07340', 172], ['1.06930', 204], ['1.06520', 237],
  ['1.06110', 269], ['1.05700', 301], ['1.05290', 333]
];

const timeLabels = [
  ['8 Nov 2024', 361], ['11 Nov 02:00', 425], ['11 Nov 18:00', 489], ['12 Nov 10:00', 553],
  ['13 Nov 02:00', 617], ['13 Nov 18:00', 681], ['14 Nov 10:00', 745], ['15 Nov 02:00', 809],
  ['15 Nov 18:00', 873], ['18 Nov 10:00', 937], ['19 Nov 02:00', 1001]
];

const GRID = '#778899';
const parts = [];

grid.xs.forEach(x => {
  parts.push(`<line x1="${x + 0.5}" y1="110" x2="${x + 0.5}" y2="365" stroke="${GRID}" stroke-dasharray="3 3"/>`);
});
grid.ys.forEach(y => {
  parts.push(`<line x1="362" y1="${y + 0.5}" x2="1034" y2="${y + 0.5}" stroke="${GRID}" stroke-dasharray="3 3"/>`);
});

parts.push(`<line x1="362" y1="288.5" x2="1034" y2="288.5" stroke="${GRID}"/>`);

bars.forEach((bar, i) => {
  const x = 361 + i * 4;
  const wick = wicks[i] || [bar[0] - (i * 3) % 4, bar[1] + (i * 5) % 4];
  parts.push(`<line x1="${x + 0.5}" y1="${wick[0]}" x2="${x + 0.5}" y2="${wick[1]}" stroke="#00ff00"/>`);
  const fill = bar[2] ? '#fff' : '#000';
  parts.push(`<rect x="${x - 0.5}" y="${bar[0] + 0.5}" width="2" height="${Math.max(bar[1] - bar[0], 1)}" fill="${fill}" stroke="#00ff00"/>`);
});

parts.push(`<polyline points="${avg.map(p => p.join(',')).join(' ')}" fill="none" stroke="#ff0000" shape-rendering="crispEdges"/>`);

// plot frame and ticks
parts.push('<rect x="361.5" y="109.5" width="673" height="256" fill="none" stroke="#fff"/>');
priceLabels.forEach(([text, y]) => {
  parts.push(`<line x1="1035" y1="${y + 0.5}" x2="1038" y2="${y + 0.5}" stroke="#fff"/>`);
  parts.push(`<text class="axis-text price-text" x="1040" y="${y + 4}">${text}</text>`);
});
timeLabels.forEach(([text, x]) => {
  parts.push(`<line x1="${x + 0.5}" y1="366" x2="${x + 0.5}" y2="370" stroke="#fff"/>`);
  parts.push(`<text class="axis-text" x="${x}" y="378">${text}</text>`);
});

// current price tag
parts.push('<rect x="1037" y="283" width="39" height="11" fill="#778899"/>');
parts.push('<text class="price-tag" x="1040" y="292">1.05855</text>');

// flag and chart name
parts.push('<rect x="366.500" y="115.500" width="14" height="10" fill="#1d5fa8" stroke="#1d5fa8"/>');
parts.push('<rect x="367" y="116" width="6.500" height="9" fill="#e8503a"/>');
parts.push('<path d="M368 118 H373 M368 120.500 H373 M368 123 H373 M375 118 H380 M375 120.500 H380 M375 123 H380" stroke="#fff"/>');
parts.push('<text class="chart-name" x="386" y="124">EURUSD, H1:  Euro vs US Dollar</text>');

document.getElementById('chart').innerHTML = parts.join('');
```
